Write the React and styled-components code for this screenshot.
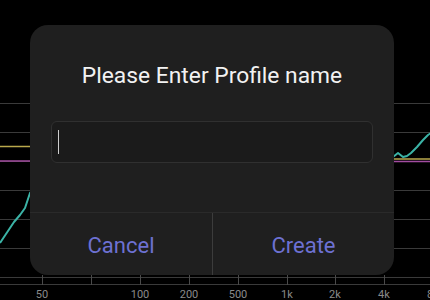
import React from "react";
import styled, { createGlobalStyle } from "styled-components";

const Global = createGlobalStyle`
  html, body { margin: 0; padding: 0; background: #000; }
  body { font-family: Roboto, "Noto Sans", "Liberation Sans", sans-serif; }
`;

const Screen = styled.div`
  position: relative;
  width: 430px;
  height: 300px;
  overflow: hidden;
  background: #000;
`;

const Chart = styled.svg`
  display: block;
  width: 430px;
  height: 300px;
`;

const Dialog = styled.div`
  position: absolute;
  left: 30px;
  top: 25px;
  width: 364px;
  height: 250px;
  border-radius: 18px;
  background: #1f1f1f;
  display: flex;
  flex-direction: column;
  overflow: hidden;
`;

const Title = styled.div`
  height: 96px;
  padding-top: 38px;
  box-sizing: border-box;
  text-align: center;
  color: #f2f2f2;
  font-size: 22.8px;
  line-height: 26px;
`;

const Field = styled.div`
  margin: 0 21px;
  height: 42px;
  box-sizing: border-box;
  border: 1px solid #303030;
  border-radius: 6px;
  background: #1b1b1b;
  display: flex;
  align-items: center;
  padding-left: 6px;
`;

const Caret = styled.div`
  width: 1px;
  height: 24px;
  background: #cfcfcf;
`;

const Footer = styled.div`
  margin-top: auto;
  height: 62px;
  border-top: 1px solid #2a2a2a;
  display: grid;
  grid-template-columns: 1fr 1fr;
`;

const Action = styled.div`
  display: flex;
  align-items: center;
  justify-content: center;
  color: #6d71d2;
  font-size: 22px;
  padding-top: 2px;
  border-left: ${(p) => (p.$divided ? "1px solid #3c3c3c" : "none")};
`;

const grid = [103, 132, 161, 190, 219, 248, 277, 284];
const ticks = [
  { x: 42, l: "50" },
  { x: 91, l: "" },
  { x: 140, l: "100" },
  { x: 189, l: "200" },
  { x: 238, l: "500" },
  { x: 287, l: "1k" },
  { x: 335, l: "2k" },
  { x: 384, l: "4k" },
  { x: 433, l: "8k" },
];

export default function App() {
  return (
    <>
      <Global />
      <Screen>
        <Chart viewBox="0 0 430 300">
          <rect width="430" height="300" fill="#000" />
          {grid.map((y) => (
            <line key={y} x1="0" x2="430" y1={y + 0.5} y2={y + 0.5} stroke="#3a3a3a" strokeWidth="1" />
          ))}
          {ticks.map((t) => (
            <g key={t.x}>
              <line x1={t.x + 0.5} x2={t.x + 0.5} y1="275" y2="285" stroke="#4a4a4a" strokeWidth="1" />
              <text x={t.x} y="298" fill="#8a8a8a" fontSize="11" textAnchor="middle" fontFamily="Roboto, sans-serif">
                {t.l}
              </text>
            </g>
          ))}
          <path d="M0 146.5 L40 146.5 L380 159 L430 159" stroke="#b9a84c" strokeWidth="1.5" fill="none" />
          <path d="M0 161 L40 161 L380 161.5 L430 161.5" stroke="#a24ca0" strokeWidth="1.5" fill="none" />
          <path
            d="M0 243 L8 231 L14 222 L20 215 L25 208 L30 193 L60 160 L390 158 L393 157 L398 153 L403 157 L407 156 L411 153 L417 147 L423 140 L428 135 L431 133"
            stroke="#3bb3a6"
            strokeWidth="2"
            fill="none"
            strokeLinejoin="round"
          />
        </Chart>
        <Dialog>
          <Title>Please Enter Profile name</Title>
          <Field>
            <Caret />
          </Field>
          <Footer>
            <Action>Cancel</Action>
            <Action $divided>Create</Action>
          </Footer>
        </Dialog>
      </Screen>
    </>
  );
}
